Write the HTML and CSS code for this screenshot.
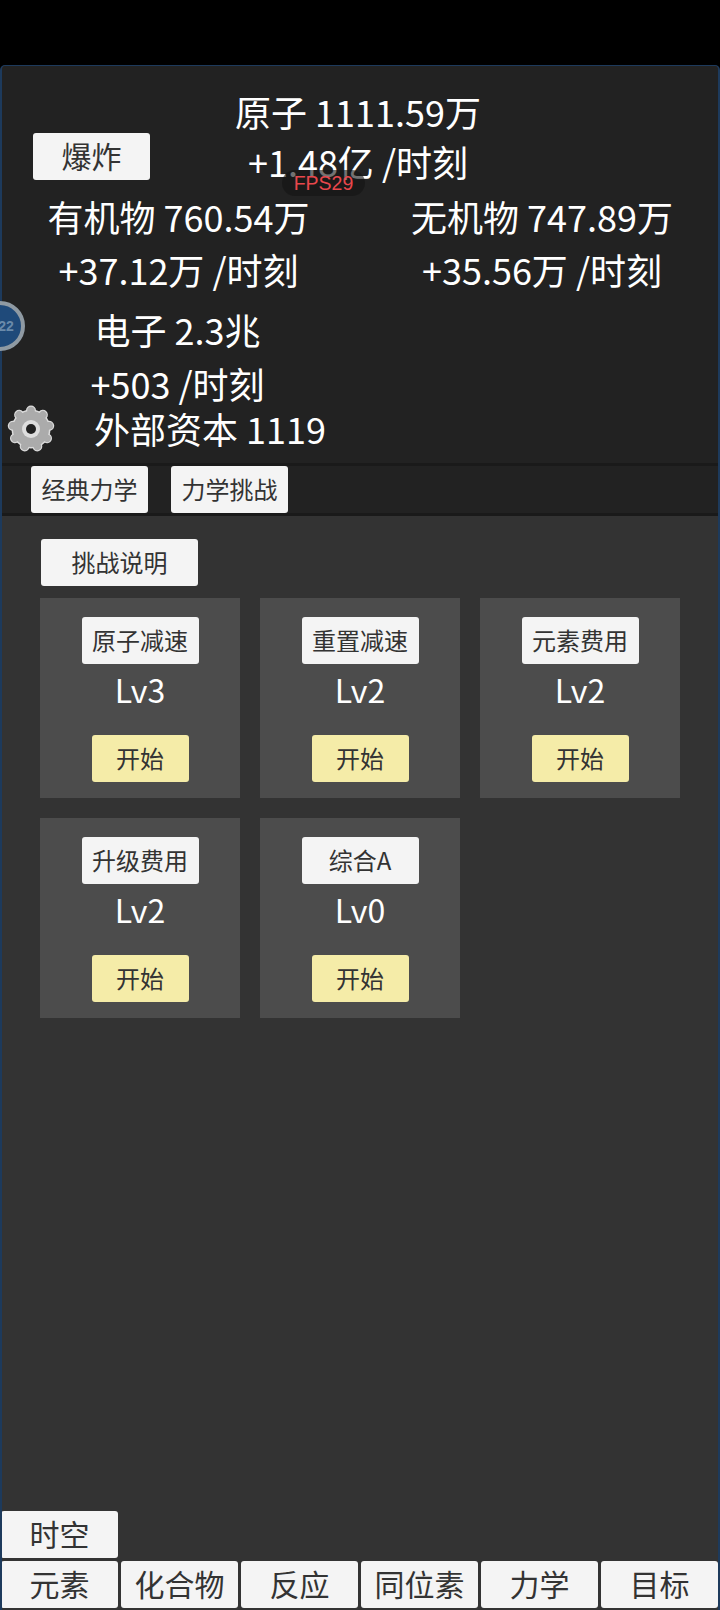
FILE: index.html
```html
<!DOCTYPE html>
<html lang="zh-CN">
<head>
    <meta charset="UTF-8">
    <meta name="viewport" content="width=device-width, initial-scale=1.0">
    <title>力学挑战</title>
    <link rel="stylesheet" href="styles.css">
</head>
<body>
    <div class="frame">
        <div class="stats">
            <div class="atom-row">
                <button class="btn blast">爆炸</button>
                <div class="res">
                    <p>原子 1111.59万</p>
                    <p>+1.48亿 /时刻</p>
                </div>
            </div>
            <div class="res-grid">
                <div class="res pair">
                    <p>有机物 760.54万</p>
                    <p>+37.12万 /时刻</p>
                </div>
                <div class="res pair inorganic">
                    <p>无机物 747.89万</p>
                    <p>+35.56万 /时刻</p>
                </div>
                <div class="res electron">
                    <p>电子 2.3兆</p>
                    <p>+503 /时刻</p>
                </div>
            </div>
            <div class="capital">
                <svg class="gear" viewBox="0 0 48 50">
                    <defs>
                        <g id="teeth" stroke-linecap="round">
                            <line x1="24" y1="12" x2="24" y2="6.5"/>
                            <line x1="24" y1="12" x2="24" y2="6.5" transform="rotate(40 24 25)"/>
                            <line x1="24" y1="12" x2="24" y2="6.5" transform="rotate(80 24 25)"/>
                            <line x1="24" y1="12" x2="24" y2="6.5" transform="rotate(120 24 25)"/>
                            <line x1="24" y1="12" x2="24" y2="6.5" transform="rotate(160 24 25)"/>
                            <line x1="24" y1="12" x2="24" y2="6.5" transform="rotate(200 24 25)"/>
                            <line x1="24" y1="12" x2="24" y2="6.5" transform="rotate(240 24 25)"/>
                            <line x1="24" y1="12" x2="24" y2="6.5" transform="rotate(280 24 25)"/>
                            <line x1="24" y1="12" x2="24" y2="6.5" transform="rotate(320 24 25)"/>
                        </g>
                    </defs>
                    <use href="#teeth" stroke="#dcdcdc" stroke-width="10"/>
                    <circle cx="24" cy="25" r="19.5" fill="#dcdcdc"/>
                    <use href="#teeth" stroke="#ababab" stroke-width="7.5"/>
                    <circle cx="24" cy="25" r="18" fill="#ababab"/>
                    <circle cx="24" cy="25" r="9" fill="#dedede"/>
                    <circle cx="24" cy="25" r="5" fill="#222"/>
                </svg>
                <p>外部资本 1119</p>
            </div>
        </div>
        <div class="tabs">
            <button class="btn small">经典力学</button>
            <button class="btn small">力学挑战</button>
        </div>
        <div class="content">
            <button class="btn small explain">挑战说明</button>
            <div class="cards">
                <div class="card">
                    <button class="btn small">原子减速</button>
                    <span class="lv">Lv3</span>
                    <button class="btn start">开始</button>
                </div>
                <div class="card">
                    <button class="btn small">重置减速</button>
                    <span class="lv">Lv2</span>
                    <button class="btn start">开始</button>
                </div>
                <div class="card">
                    <button class="btn small">元素费用</button>
                    <span class="lv">Lv2</span>
                    <button class="btn start">开始</button>
                </div>
                <div class="card">
                    <button class="btn small">升级费用</button>
                    <span class="lv">Lv2</span>
                    <button class="btn start">开始</button>
                </div>
                <div class="card">
                    <button class="btn small">综合A</button>
                    <span class="lv">Lv0</span>
                    <button class="btn start">开始</button>
                </div>
            </div>
        </div>
        <div class="bottom">
            <div class="bottom-row">
                <button class="btn nav">时空</button>
            </div>
            <div class="bottom-row">
                <button class="btn nav">元素</button>
                <button class="btn nav">化合物</button>
                <button class="btn nav">反应</button>
                <button class="btn nav">同位素</button>
                <button class="btn nav">力学</button>
                <button class="btn nav">目标</button>
            </div>
        </div>
    </div>

    <div class="fps">FPS29</div>
    <div class="float-ball">22</div>
</body>
</html>
```

FILE: styles.css
```css
* {
    box-sizing: border-box;
}
html, body {
    margin: 0;
    height: 1610px;
    background: #000;
    overflow: hidden;
}
body {
    padding-top: 65px;
    font-family: "Noto Sans CJK SC", "Noto Sans", sans-serif;
    color: #fff;
}
p {
    margin: 0;
}
.frame {
    height: 1545px;
    display: flex;
    flex-direction: column;
    background: #333;
    border-left: 2px solid #1d3a5c;
    border-right: 2px solid #1d3a5c;
    border-top: 1px solid #1d3a5c;
    border-radius: 5px 5px 0 0;
    overflow: hidden;
}
.btn {
    display: block;
    padding: 0 0 3px;
    border: none;
    border-radius: 3px;
    width: 117px;
    height: 47px;
    background: #f4f4f4;
    color: #333;
    font-family: inherit;
    font-size: 24px;
    flex: none;
}

/* top numbers */
.stats {
    height: 397px;
    background: #222;
    font-size: 36px;
    line-height: 51px;
    padding-top: 20px;
}
.atom-row {
    position: relative;
    height: 105px;
}
.atom-row .res {
    margin-left: -4px;
}
.atom-row p + p {
    margin-top: -1px;
}
.blast {
    position: absolute;
    left: 31px;
    top: 47px;
    font-size: 30px;
}
.res {
    text-align: center;
}
.res-grid {
    display: grid;
    grid-template-columns: 353px 1fr;
    row-gap: 9px;
}
.pair p + p {
    margin-top: 2px;
}
.inorganic {
    padding-left: 11px;
}
.electron {
    margin-right: 2px;
}
.electron p + p {
    margin-top: 3px;
}
.capital {
    display: flex;
    align-items: center;
    margin-top: -6px;
}
.capital p {
    margin-left: 39px;
}
.gear {
    width: 48px;
    height: 50px;
    margin-left: 5px;
}

/* tabs under the numbers */
.tabs {
    height: 53px;
    display: flex;
    gap: 23px;
    align-items: center;
    padding-left: 29px;
    background: #222;
    border-top: 3px solid #1a1a1a;
    border-bottom: 3px solid #1a1a1a;
}
.content {
    flex: 1;
    padding: 23px 0 0 38px;
}
.explain {
    width: 157px;
    margin-left: 1px;
}
.cards {
    display: grid;
    grid-template-columns: repeat(3, 200px);
    gap: 20px;
    margin-top: 12px;
}
.card {
    height: 200px;
    padding-top: 19px;
    background: #4c4c4c;
    display: flex;
    flex-direction: column;
    align-items: center;
}
.lv {
    font-size: 32px;
    line-height: 42px;
    margin-top: 4px;
}
.start {
    width: 97px;
    margin-top: 25px;
    background: #f5eca8;
}

/* bottom nav */
.bottom {
    padding: 0 0 2px 0;
    margin-left: -1px;
}
.bottom-row {
    display: flex;
    gap: 3px;
    margin-top: 3px;
}
.nav {
    padding-bottom: 4px;
    font-size: 30px;
}

/* things over the page */
.fps {
    position: absolute;
    left: 282px;
    top: 170px;
    width: 83px;
    height: 26px;
    border-radius: 13px;
    background: rgba(20, 20, 20, 0.6);
    color: #e8474c;
    font-family: "Liberation Sans", sans-serif;
    font-size: 19.5px;
    line-height: 26px;
    text-align: center;
}
.float-ball {
    position: absolute;
    left: -25px;
    top: 301px;
    width: 50px;
    height: 50px;
    padding-left: 12px;
    border: 4px solid #8f9aa3;
    border-radius: 50%;
    background: #1f4a7a;
    color: #6a8aaa;
    font-family: "Liberation Sans", sans-serif;
    font-size: 14px;
    font-weight: bold;
    line-height: 42px;
    text-align: center;
}
```
